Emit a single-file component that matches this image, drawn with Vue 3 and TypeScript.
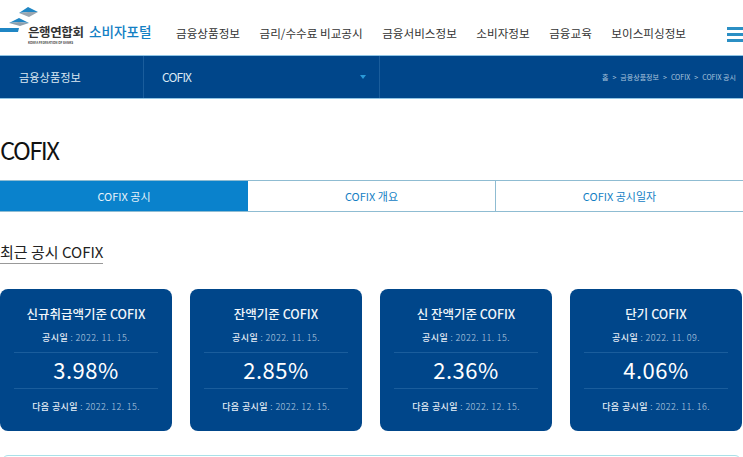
<template>
  <div class="page">
    <header class="top">
      <a class="logo">
        <svg class="logo__mark" width="40" height="34" viewBox="0 0 40 34">
          <path d="M19 13 L28 7 L38 12 L28 12 Z" fill="#1f86c4" />
          <path d="M19 13 L28 12 L38 12 L29 17 Z" fill="#9aa6b0" />
          <path d="M9 23 L19 18 L29 23 L19 22 Z" fill="#1f86c4" />
          <path d="M9 23 L19 22 L29 23 L20 26 Z" fill="#8fa0ad" />
          <path d="M0 28 H19 L18 32 H0 Z" fill="#1f86c4" />
        </svg>
        <span class="logo__org">
          <b>은행연합회</b>
          <small>KOREA FEDERATION OF BANKS</small>
        </span>
        <span class="logo__portal">소비자포털</span>
      </a>
      <nav class="gnb">
        <a v-for="item in menu" :key="item">{{ item }}</a>
      </nav>
      <div class="burger"><i></i><i></i><i></i></div>
    </header>

    <div class="subbar">
      <div class="subbar__section">금융상품정보</div>
      <div class="subbar__select">
        <span class="subbar__value">COFIX</span>
        <span class="subbar__arrow"></span>
      </div>
      <div class="subbar__crumbs">
        <span>홈</span><em>&gt;</em><span>금융상품정보</span><em>&gt;</em><span>COFIX</span><em>&gt;</em><span>COFIX 공시</span>
      </div>
    </div>

    <h1 class="title">COFIX</h1>

    <div class="tabs">
      <a
        v-for="(tab, i) in tabs"
        :key="tab"
        class="tabs__item"
        :class="{ 'tabs__item--on': i === 0 }"
      >{{ tab }}</a>
    </div>

    <h2 class="subtitle"><span>최근 공시 COFIX</span></h2>

    <div class="cards">
      <section v-for="card in cards" :key="card.name" class="card">
        <h3>{{ card.name }}</h3>
        <p class="card__date"><b>공시일</b> : {{ card.date }}</p>
        <p class="card__rate">{{ card.rate }}</p>
        <p class="card__next"><b>다음 공시일</b> : {{ card.next }}</p>
      </section>
    </div>

    <div class="notice"></div>
  </div>
</template>

<script setup lang="ts">
interface Card {
  name: string
  date: string
  rate: string
  next: string
}

const menu = ['금융상품정보', '금리/수수료 비교공시', '금융서비스정보', '소비자정보', '금융교육', '보이스피싱정보']
const tabs = ['COFIX 공시', 'COFIX 개요', 'COFIX 공시일자']

const cards: Card[] = [
  { name: '신규취급액기준 COFIX', date: '2022. 11. 15.', rate: '3.98%', next: '2022. 12. 15.' },
  { name: '잔액기준 COFIX', date: '2022. 11. 15.', rate: '2.85%', next: '2022. 12. 15.' },
  { name: '신 잔액기준 COFIX', date: '2022. 11. 15.', rate: '2.36%', next: '2022. 12. 15.' },
  { name: '단기 COFIX', date: '2022. 11. 09.', rate: '4.06%', next: '2022. 11. 16.' },
]
</script>

<style>
html,
body {
  margin: 0;
  overflow: hidden;
  background: #fff;
}
</style>

<style scoped>
.page {
  width: 743px;
  height: 457px;
  overflow: hidden;
  font-family: "Noto Sans CJK KR", "Noto Sans", sans-serif;
  color: #222;
}

.top {
  display: flex;
  align-items: flex-start;
  height: 56px;
  box-sizing: border-box;
  border-bottom: 1px solid #8fc4e4;
}

.logo {
  position: relative;
  display: flex;
  width: 176px;
  flex-shrink: 0;
  padding: 24px 0 0 28px;
  box-sizing: border-box;
}

.logo__mark {
  position: absolute;
  left: 0;
  top: 0;
}

.logo__org {
  display: flex;
  flex-direction: column;
  width: 61px;
}

.logo__org b {
  font-size: 12.5px;
  line-height: 15px;
  font-weight: 700;
  color: #333;
  letter-spacing: -0.4px;
}

.logo__org small {
  margin-top: 2px;
  font-size: 3px;
  line-height: 4px;
  font-weight: 700;
  color: #444;
  white-space: nowrap;
}

.logo__portal {
  font-size: 13.6px;
  line-height: 15px;
  font-weight: 500;
  color: #1380c4;
  white-space: nowrap;
}

.gnb {
  display: flex;
  gap: 19.5px;
  padding-top: 24px;
  font-size: 11.6px;
  line-height: 18px;
  color: #333;
  white-space: nowrap;
}

.burger {
  display: flex;
  flex-direction: column;
  gap: 3px;
  width: 16px;
  margin-left: auto;
  padding-top: 27px;
}

.burger i {
  display: block;
  height: 3px;
  background: #2b8fc4;
}

.subbar {
  display: flex;
  align-items: center;
  height: 43px;
  box-sizing: border-box;
  background: #00468a;
  border-bottom: 1px solid #8fc4e4;
  color: #dbe8f3;
  font-size: 11.2px;
}

.subbar__section {
  width: 144px;
  flex-shrink: 0;
  padding-left: 19px;
  box-sizing: border-box;
  line-height: 42px;
  border-right: 1px solid #1a5d9c;
}

.subbar__select {
  display: flex;
  align-items: center;
  justify-content: space-between;
  width: 236px;
  flex-shrink: 0;
  padding: 0 13px 0 18px;
  box-sizing: border-box;
  line-height: 42px;
  border-right: 1px solid #1a5d9c;
}

.subbar__value {
  font-size: 12px;
  letter-spacing: -0.8px;
}

.subbar__arrow {
  width: 0;
  height: 0;
  border-left: 3px solid transparent;
  border-right: 3px solid transparent;
  border-top: 4px solid #2a9ad8;
}

.subbar__crumbs {
  display: flex;
  gap: 4px;
  flex: 1;
  min-width: 0;
  padding-left: 222px;
  font-size: 7px;
  color: #a9c4dc;
  white-space: nowrap;
  overflow: hidden;
}

.subbar__crumbs em {
  font-style: normal;
}

.title {
  margin: 0;
  padding-top: 35px;
  font-size: 24px;
  line-height: 32px;
  font-weight: 400;
  letter-spacing: -1.6px;
  color: #111;
}

.tabs {
  display: grid;
  grid-template-columns: 248px 247px 248px;
  height: 32px;
  margin-top: 14px;
  box-sizing: border-box;
  border-top: 1px solid #8fbcd2;
  border-bottom: 1px solid #8fbcd2;
}

.tabs__item {
  display: flex;
  align-items: center;
  justify-content: center;
  font-size: 11px;
  color: #1380c4;
}

.tabs__item + .tabs__item + .tabs__item {
  border-left: 1px solid #8fbcd2;
}

.tabs__item--on {
  background: #0a82cc;
  color: #e8f3fa;
}

.subtitle {
  margin: 0;
  padding-top: 28px;
  font-size: 15px;
  line-height: 23px;
  font-weight: 400;
  color: #222;
}

.subtitle span {
  display: inline-block;
  border-bottom: 1px solid #999;
}

.cards {
  display: flex;
  gap: 18px;
  margin-top: 25px;
}

.card {
  width: 172px;
  height: 142px;
  box-sizing: border-box;
  padding: 15px 14px 0;
  border-radius: 8px;
  background: #00468a;
  color: #e6eef6;
  text-align: center;
}

.card h3 {
  margin: 0;
  font-size: 12.5px;
  line-height: 20px;
  font-weight: 500;
  color: #f2f6fa;
  white-space: nowrap;
}

.card p {
  margin: 0;
}

.card__date,
.card__next {
  font-size: 9px;
  letter-spacing: 0.4px;
  font-weight: 300;
  color: #b8cde0;
}

.card__date b,
.card__next b {
  font-weight: 500;
  color: #e6eef6;
}

.card .card__date {
  margin-top: 5px;
  padding-bottom: 5px;
  line-height: 18px;
}

.card__rate {
  height: 35px;
  line-height: 33px;
  font-size: 22px;
  letter-spacing: 0.5px;
  color: #fff;
  border-top: 1px solid #1a5d9c;
  border-bottom: 1px solid #1a5d9c;
}

.card .card__next {
  margin-top: 10px;
  line-height: 16px;
}

.notice {
  height: 20px;
  margin: 24px 2px 0;
  box-sizing: border-box;
  border: 1px solid #a9e0e8;
  border-radius: 6px 6px 0 0;
}
</style>
